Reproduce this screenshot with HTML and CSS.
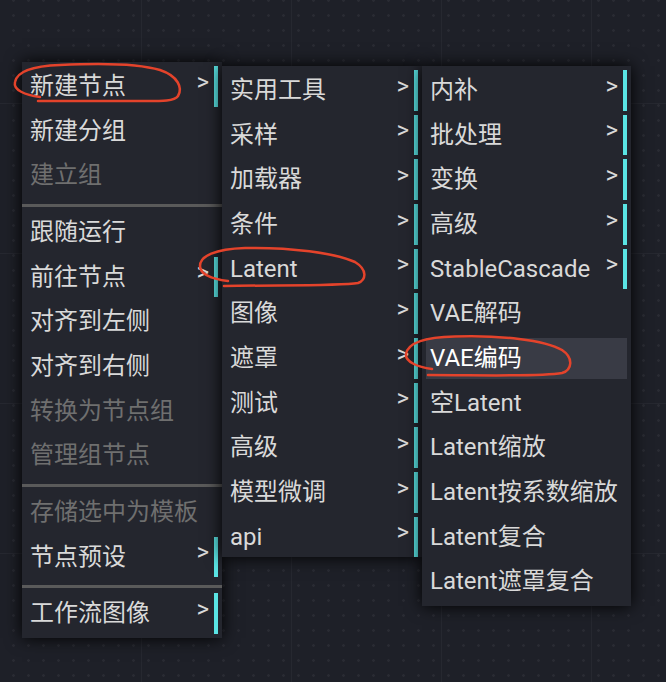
FILE: index.html
```html
<!DOCTYPE html>
<html lang="zh-CN">
<head>
<meta charset="utf-8">
<title>ComfyUI 右键菜单</title>
<link rel="stylesheet" href="styles.css">
</head>
<body>
<div class="canvas">
  <div class="menu menu-main">
    <div class="item sub"><span class="label">新建节点</span><span class="arrow">&gt;</span></div>
    <div class="item"><span class="label">新建分组</span></div>
    <div class="item disabled"><span class="label">建立组</span></div>
    <div class="sep"></div>
    <div class="item"><span class="label">跟随运行</span></div>
    <div class="item sub"><span class="label">前往节点</span><span class="arrow">&gt;</span></div>
    <div class="item"><span class="label">对齐到左侧</span></div>
    <div class="item"><span class="label">对齐到右侧</span></div>
    <div class="item disabled"><span class="label">转换为节点组</span></div>
    <div class="item disabled"><span class="label">管理组节点</span></div>
    <div class="sep"></div>
    <div class="item disabled"><span class="label">存储选中为模板</span></div>
    <div class="item sub"><span class="label">节点预设</span><span class="arrow">&gt;</span></div>
    <div class="sep"></div>
    <div class="item sub"><span class="label">工作流图像</span><span class="arrow">&gt;</span></div>
  </div>

  <div class="menu menu-nodes">
    <div class="item sub"><span class="label">实用工具</span><span class="arrow">&gt;</span></div>
    <div class="item sub"><span class="label">采样</span><span class="arrow">&gt;</span></div>
    <div class="item sub"><span class="label">加载器</span><span class="arrow">&gt;</span></div>
    <div class="item sub"><span class="label">条件</span><span class="arrow">&gt;</span></div>
    <div class="item sub"><span class="label">Latent</span><span class="arrow">&gt;</span></div>
    <div class="item sub"><span class="label">图像</span><span class="arrow">&gt;</span></div>
    <div class="item sub"><span class="label">遮罩</span><span class="arrow">&gt;</span></div>
    <div class="item sub"><span class="label">测试</span><span class="arrow">&gt;</span></div>
    <div class="item sub"><span class="label">高级</span><span class="arrow">&gt;</span></div>
    <div class="item sub"><span class="label">模型微调</span><span class="arrow">&gt;</span></div>
    <div class="item sub"><span class="label">api</span><span class="arrow">&gt;</span></div>
  </div>

  <div class="menu menu-latent">
    <div class="item sub"><span class="label">内补</span><span class="arrow">&gt;</span></div>
    <div class="item sub"><span class="label">批处理</span><span class="arrow">&gt;</span></div>
    <div class="item sub"><span class="label">变换</span><span class="arrow">&gt;</span></div>
    <div class="item sub"><span class="label">高级</span><span class="arrow">&gt;</span></div>
    <div class="item sub"><span class="label">StableCascade</span><span class="arrow">&gt;</span></div>
    <div class="item"><span class="label">VAE解码</span></div>
    <div class="item active"><span class="label">VAE编码</span></div>
    <div class="item"><span class="label">空Latent</span></div>
    <div class="item"><span class="label">Latent缩放</span></div>
    <div class="item"><span class="label">Latent按系数缩放</span></div>
    <div class="item"><span class="label">Latent复合</span></div>
    <div class="item"><span class="label">Latent遮罩复合</span></div>
  </div>

  <svg class="marks" width="666" height="682" viewBox="0 0 666 682" aria-hidden="true">
    <path d="M40,97 C25,95 13,90 15,82 C17,72 30,66 60,65 C100,63 140,64 160,70 C178,76 183,88 178,96 C174,102 160,101 130,101 L38,101"/>
    <path d="M228,281 C212,279 200,274 200,266 C200,256 215,249 245,248 C290,247 335,253 355,262 C368,270 366,280 358,283 C340,286 280,285 224,286"/>
    <path d="M432,369 C418,367 405,362 406,354 C408,343 425,337 455,336.5 C500,335 545,340 562,350 C574,358 572,370 562,373 C540,377 480,375 428,375"/>
  </svg>
</div>
</body>
</html>
```

FILE: styles.css
```css
html, body {
  margin: 0;
  padding: 0;
  background: #1e2028;
}

.canvas {
  position: relative;
  width: 666px;
  height: 682px;
  overflow: hidden;
  background-color: #1e2028;
  background-image:
    linear-gradient(to right, rgba(255,255,255,0.035) 1px, transparent 1px),
    linear-gradient(to bottom, rgba(255,255,255,0.035) 1px, transparent 1px),
    radial-gradient(circle, rgba(255,255,255,0.05) 1px, transparent 1.6px);
  background-size: 150px 150px, 150px 150px, 15px 15px;
  background-position: 141px 0, 0 103px, 6px 8px;
  font-family: Roboto, "Noto Sans CJK SC", sans-serif;
}

.menu {
  position: absolute;
  display: flex;
  flex-direction: column;
  box-sizing: border-box;
  padding: 2px 4px;
  background: #24262e;
  box-shadow: 0 0 16px #000;
}

.menu-main {
  left: 22px;
  top: 62px;
  width: 200px;
}

.menu-nodes {
  left: 222px;
  top: 66px;
  width: 200px;
  height: 491px;
  overflow: hidden;
}

.menu-latent {
  left: 422px;
  top: 66px;
  width: 209px;
}

.item {
  display: flex;
  flex-shrink: 0;
  align-items: center;
  justify-content: space-between;
  box-sizing: border-box;
  height: 40.67px;
  margin: 2px 0;
  padding-left: 4px;
  font-size: 24px;
  line-height: 40.67px;
  color: #d9d9d9;
  white-space: nowrap;
}

.item.sub {
  border-right: 4px solid #5ae4e4;
}

.item.disabled {
  color: #6f6f6f;
}

.item.active {
  background: #393b45;
  color: #ffffff;
}

.arrow {
  margin-right: 5px;
  padding-bottom: 9px;
  line-height: 24px;
}

.sep {
  flex-shrink: 0;
  height: 3px;
  margin: 6px -4px 3px;
  background: #5a5a5a;
}

.marks {
  position: absolute;
  left: 0;
  top: 0;
  pointer-events: none;
}

.marks path {
  fill: none;
  stroke: #e4432b;
  stroke-width: 2.5;
  stroke-linecap: round;
  stroke-linejoin: round;
}
```
